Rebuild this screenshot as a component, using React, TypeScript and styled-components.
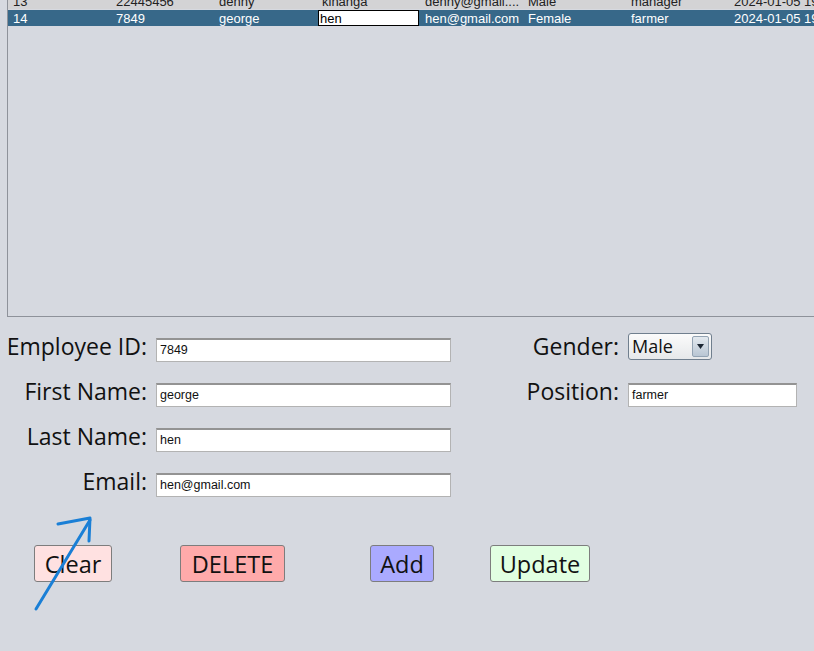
import React from "react";
import styled, { createGlobalStyle } from "styled-components";

const Global = createGlobalStyle`
  html, body { margin: 0; padding: 0; }
  body { background: #d6d9e0; overflow: hidden; }
`;

const Page = styled.div`
  position: relative;
  width: 814px;
  height: 651px;
  background: #d6d9e0;
  overflow: hidden;
  font-family: "Liberation Sans", Arial, sans-serif;
`;

const TablePanel = styled.div`
  margin-left: 7px;
  height: 316px;
  border-left: 1px solid #8e929a;
  border-bottom: 1px solid #8e929a;
  overflow: hidden;
`;

const Rows = styled.div`
  margin-top: -7px;
  display: flex;
  flex-direction: column;
  gap: 1px;
`;

const Row = styled.div<{ $selected?: boolean }>`
  display: grid;
  grid-template-columns: repeat(8, 103px);
  height: 16px;
  background: ${(p) => (p.$selected ? "#376889" : "#d3d3d5")};
  color: ${(p) => (p.$selected ? "#ffffff" : "#222222")};
  font-size: 13px;
  line-height: 17px;
  white-space: nowrap;
  overflow: hidden;
`;

const Cell = styled.div`
  padding-left: 5px;
  overflow: hidden;
`;

const EditCell = styled.div`
  background: #ffffff;
  color: #000000;
  border: 1px solid #000000;
  box-sizing: border-box;
  height: 16px;
  line-height: 15px;
  padding-left: 1px;
  margin-left: 1px;
  margin-right: 1px;
`;

const FormArea = styled.div`
  display: flex;
  gap: 48px;
  margin-top: 10px;
`;

const FieldGrid = styled.div<{ $label: number; $field: number }>`
  display: grid;
  grid-template-columns: ${(p) => p.$label}px ${(p) => p.$field}px;
  grid-auto-rows: 45px;
  column-gap: 9px;
  align-items: center;
`;

const Label = styled.label`
  font-family: "Open Sans", "Noto Sans", sans-serif;
  font-size: 23px;
  color: #111111;
  text-align: right;
  white-space: nowrap;
  margin-top: -7px;
`;

const TextField = styled.div`
  height: 24px;
  box-sizing: border-box;
  background: #ffffff;
  border: 1px solid #b3b3b3;
  border-top: 2px solid #939393;
  font-size: 12.5px;
  line-height: 21px;
  padding-left: 3px;
  color: #111111;
  font-family: "Liberation Sans", Arial, sans-serif;
`;

const Select = styled.div`
  width: 84px;
  height: 27px;
  box-sizing: border-box;
  border: 1px solid #707f8e;
  border-radius: 3px;
  background: linear-gradient(#fbfbfb, #e6e8ea);
  display: flex;
  align-items: stretch;
  margin-top: -6px;
  overflow: hidden;
`;

const SelectText = styled.div`
  flex: 1;
  font-family: "Open Sans", "Noto Sans", sans-serif;
  font-size: 18px;
  line-height: 25px;
  padding-left: 3px;
  color: #111111;
`;

const SelectArrow = styled.div`
  width: 15px;
  margin: 2px 2px 2px 0;
  border: 1px solid #93a3b3;
  border-radius: 2px;
  background: linear-gradient(#e3e9ef, #b9c6d3);
  display: flex;
  align-items: center;
  justify-content: center;
`;

const ButtonRow = styled.div`
  display: grid;
  grid-template-columns: 146px 190px 120px auto;
  padding-left: 34px;
  margin-top: 38px;
  align-items: start;
`;

const Button = styled.button<{ $bg: string; $w: number }>`
  width: ${(p) => p.$w}px;
  height: 37px;
  background: ${(p) => p.$bg};
  border: 1px solid #7d7d7d;
  border-radius: 3px;
  font-family: "Open Sans", "Noto Sans", sans-serif;
  font-size: 23.5px;
  color: #111111;
  padding: 0;
  line-height: 36px;
  cursor: pointer;
`;

const Overlay = styled.svg`
  position: absolute;
  left: 0;
  top: 0;
  pointer-events: none;
`;

const row13 = ["13", "22445456", "denny", "kinanga", "denny@gmail....", "Male", "manager", "2024-01-05 19:"];

export default function App() {
  return (
    <Page>
      <Global />
      <TablePanel>
        <Rows>
          <Row>
            {row13.map((c, i) => (
              <Cell key={i}>{c}</Cell>
            ))}
          </Row>
          <Row $selected>
            <Cell>14</Cell>
            <Cell>7849</Cell>
            <Cell>george</Cell>
            <EditCell>hen</EditCell>
            <Cell>hen@gmail.com</Cell>
            <Cell>Female</Cell>
            <Cell>farmer</Cell>
            <Cell>2024-01-05 19:</Cell>
          </Row>
        </Rows>
      </TablePanel>
      <FormArea>
        <FieldGrid $label={147} $field={295}>
          <Label>Employee ID:</Label>
          <TextField>7849</TextField>
          <Label>First Name:</Label>
          <TextField>george</TextField>
          <Label>Last Name:</Label>
          <TextField>hen</TextField>
          <Label>Email:</Label>
          <TextField>hen@gmail.com</TextField>
        </FieldGrid>
        <FieldGrid $label={120} $field={169}>
          <Label>Gender:</Label>
          <Select>
            <SelectText>Male</SelectText>
            <SelectArrow>
              <svg width="7" height="5" viewBox="0 0 7 5">
                <path d="M0 0 L7 0 L3.5 5 Z" fill="#1b2633" />
              </svg>
            </SelectArrow>
          </Select>
          <Label>Position:</Label>
          <TextField>farmer</TextField>
        </FieldGrid>
      </FormArea>
      <ButtonRow>
        <Button $bg="#ffe1e1" $w={78}>Clear</Button>
        <Button $bg="#ffaaaa" $w={105}>DELETE</Button>
        <Button $bg="#aaaaff" $w={64}>Add</Button>
        <Button $bg="#e1ffe1" $w={100}>Update</Button>
      </ButtonRow>
      <Overlay width="814" height="651" viewBox="0 0 814 651">
        <g stroke="#1a7fd6" strokeWidth="3" fill="none" strokeLinecap="round" strokeLinejoin="round">
          <path d="M36 609 L90 520" />
          <path d="M58 524 L90 518 L89 541" />
        </g>
      </Overlay>
    </Page>
  );
}
